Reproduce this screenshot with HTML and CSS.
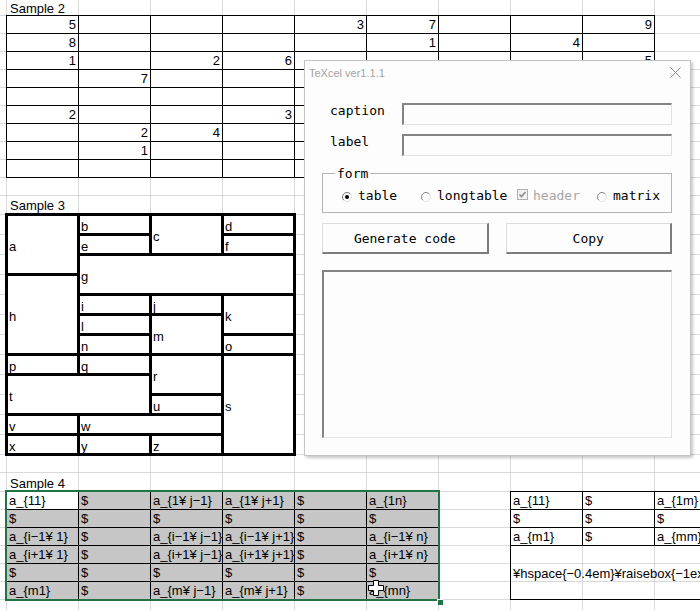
FILE: index.html
```html
<!DOCTYPE html>
<html lang="ja">
<head>
<meta charset="utf-8">
<title>TeXcel</title>
<link rel="stylesheet" href="styles.css">
</head>
<body>
<div class="sheet">
  <div class="label l2">Sample 2</div>
  <div class="sudoku">
    <div>5</div><div></div><div></div><div></div><div>3</div><div>7</div><div></div><div></div><div>9</div>
    <div>8</div><div></div><div></div><div></div><div></div><div>1</div><div></div><div>4</div><div></div>
    <div>1</div><div></div><div>2</div><div>6</div><div></div><div></div><div></div><div></div><div>5</div>
    <div></div><div>7</div><div></div><div></div><div></div><div></div><div></div><div></div><div></div>
    <div></div><div></div><div></div><div></div><div></div><div></div><div></div><div></div><div></div>
    <div>2</div><div></div><div></div><div>3</div><div></div><div></div><div></div><div></div><div></div>
    <div></div><div>2</div><div>4</div><div></div><div></div><div></div><div></div><div></div><div></div>
    <div></div><div>1</div><div></div><div></div><div></div><div></div><div></div><div></div><div></div>
    <div></div><div></div><div></div><div></div><div></div><div></div><div></div><div></div><div></div>
  </div>

  <div class="label l3">Sample 3</div>
  <div class="blocks">
    <div class="ga">a</div><div class="gb">b</div><div class="gc">c</div><div class="gd">d</div>
    <div class="ge">e</div><div class="gf">f</div><div class="gg">g</div><div class="gh">h</div>
    <div class="gi">i</div><div class="gj">j</div><div class="gk">k</div><div class="gl">l</div>
    <div class="gm">m</div><div class="gn">n</div><div class="go">o</div><div class="gp">p</div>
    <div class="gq">q</div><div class="gr">r</div><div class="gs">s</div><div class="gt">t</div>
    <div class="gu">u</div><div class="gv">v</div><div class="gw">w</div><div class="gx">x</div>
    <div class="gy">y</div><div class="gz">z</div>
  </div>

  <div class="label l4">Sample 4</div>
  <div class="s4">
    <div class="mtx">
      <div class="active">a_{11}</div><div>$</div><div>a_{1¥ j−1}</div><div>a_{1¥ j+1}</div><div>$</div><div>a_{1n}</div>
      <div>$</div><div>$</div><div>$</div><div>$</div><div>$</div><div>$</div>
      <div>a_{i−1¥ 1}</div><div>$</div><div>a_{i−1¥ j−1}</div><div>a_{i−1¥ j+1}</div><div>$</div><div>a_{i−1¥ n}</div>
      <div>a_{i+1¥ 1}</div><div>$</div><div>a_{i+1¥ j−1}</div><div>a_{i+1¥ j+1}</div><div>$</div><div>a_{i+1¥ n}</div>
      <div>$</div><div>$</div><div>$</div><div>$</div><div>$</div><div>$</div>
      <div>a_{m1}</div><div>$</div><div>a_{m¥ j−1}</div><div>a_{m¥ j+1}</div><div>$</div><div>a_{mn}</div>
    </div>
    <div class="mtx2">
      <div>a_{11}</div><div>$</div><div>a_{1m}</div>
      <div>$</div><div>$</div><div>$</div>
      <div>a_{m1}</div><div>$</div><div>a_{mm}</div>
      <div class="merged">¥hspace{−0.4em}¥raisebox{−1ex}{¥smash{¥lower{}}}</div>
    </div>
  </div>

  <svg class="cursor" width="16" height="16" viewBox="0 0 16 16">
    <polygon points="5.5,0.5 10.5,0.5 10.5,5.5 15.5,5.5 15.5,10.5 10.5,10.5 10.5,15.5 5.5,15.5 5.5,10.5 0.5,10.5 0.5,5.5 5.5,5.5" fill="#fff" stroke="#000" stroke-width="1"/>
  </svg>

  <div class="dialog">
    <div class="titlebar">
      <span class="title">TeXcel ver1.1.1</span>
      <svg class="close" width="11" height="11" viewBox="0 0 11 11">
        <path d="M0.5 0.5 L10.5 10.5 M10.5 0.5 L0.5 10.5" stroke="#8a8a8a" stroke-width="1" fill="none"/>
      </svg>
    </div>
    <div class="dbody">
      <div class="field"><span class="flabel">caption</span><span class="input"></span></div>
      <div class="field second"><span class="flabel">label</span><span class="input"></span></div>
      <fieldset class="group">
        <legend>form</legend>
        <div class="opts">
          <span class="opt o1">
            <svg class="radio" width="10" height="10" viewBox="0 0 10 10"><circle cx="5" cy="5" r="4.5" fill="#fff" stroke="#e0e0e0"/><path d="M1.8 8.2 A4.5 4.5 0 0 1 8.2 1.8" fill="none" stroke="#7a7a7a"/><circle cx="5" cy="5" r="2" fill="#000"/></svg>
            table
          </span>
          <span class="opt o2">
            <svg class="radio" width="10" height="10" viewBox="0 0 10 10"><circle cx="5" cy="5" r="4.5" fill="#fff" stroke="#e0e0e0"/><path d="M1.8 8.2 A4.5 4.5 0 0 1 8.2 1.8" fill="none" stroke="#8a8a8a"/></svg>
            longtable
          </span>
          <span class="opt o3 disabled">
            <svg class="check" width="11" height="11" viewBox="0 0 11 11"><rect x="0.5" y="0.5" width="10" height="10" fill="#f2f2f2" stroke="#b0b0b0"/><path d="M2.5 5.5 L4.5 7.5 L8.5 3" fill="none" stroke="#8c8c8c" stroke-width="1.6"/></svg>
            header
          </span>
          <span class="opt o4">
            <svg class="radio" width="10" height="10" viewBox="0 0 10 10"><circle cx="5" cy="5" r="4.5" fill="#fff" stroke="#e0e0e0"/><path d="M1.8 8.2 A4.5 4.5 0 0 1 8.2 1.8" fill="none" stroke="#8a8a8a"/></svg>
            matrix
          </span>
        </div>
      </fieldset>
      <div class="buttons">
        <span class="btn">Generate code</span>
        <span class="btn">Copy</span>
      </div>
      <div class="output"></div>
    </div>
  </div>
</div>
</body>
</html>
```

FILE: styles.css
```css
html, body {
  margin: 0;
  padding: 0;
  background: #fff;
}

.sheet {
  --g: #d9d9d9;
  position: relative;
  width: 700px;
  height: 610px;
  overflow: hidden;
  background-color: #fff;
  background-image:
    repeating-linear-gradient(to right, transparent 0 6px, var(--g) 6px 7px, transparent 7px 72px),
    repeating-linear-gradient(to bottom, transparent 0 15px, var(--g) 15px 16px, transparent 16px 18px),
    repeating-linear-gradient(to bottom, var(--g) 0 1px, transparent 1px 20px),
    linear-gradient(var(--g), var(--g)),
    repeating-linear-gradient(to bottom, var(--g) 0 1px, transparent 1px 18px);
  background-size: 100% 100%, 100% 196px, 100% 241px, 100% 1px, 100% 130px;
  background-position: 0 0, 0 0, 0 214px, 0 472px, 0 491px;
  background-repeat: no-repeat;
  font-family: "Liberation Sans", Arial, sans-serif;
  font-size: 13px;
  color: #000;
}

/* sheet labels */
.label {
  box-sizing: border-box;
  display: flex;
  align-items: flex-start;
  padding-left: 10px;
  line-height: 15px;
  white-space: nowrap;
}
.l2 { height: 15px; padding-top: 1px; }
.l3 { height: 17px; margin-top: 18px; padding-top: 2px; }
.l4 { height: 18px; margin-top: 17px; padding-top: 3px; }

/* Sample 2 */
.sudoku {
  margin-left: 6px;
  width: max-content;
  display: grid;
  grid-template-columns: repeat(9, 72px);
  grid-template-rows: repeat(9, 18px);
  border-left: 1px solid #000;
  border-top: 1px solid #000;
}
.sudoku > div {
  border-right: 1px solid #000;
  border-bottom: 1px solid #000;
  text-align: right;
  padding-right: 2px;
  line-height: 17px;
}

/* Sample 3 */
.blocks {
  margin-left: 5px;
  width: max-content;
  display: grid;
  grid-template-columns: repeat(4, 69px);
  grid-template-rows: repeat(12, 17px);
  gap: 3px;
  padding: 3px;
  background: #000;
  grid-template-areas:
    "a b c d"
    "a e c f"
    "a g g g"
    "h g g g"
    "h i j k"
    "h l m k"
    "h n m o"
    "p q r s"
    "t t r s"
    "t t u s"
    "v w w s"
    "x y z s";
}
.blocks > div {
  background: #fff;
  display: flex;
  align-items: center;
  padding: 3px 0 0 1px;
  line-height: 15px;
}
.ga { grid-area: a; } .gb { grid-area: b; } .gc { grid-area: c; } .gd { grid-area: d; }
.ge { grid-area: e; } .gf { grid-area: f; } .gg { grid-area: g; } .gh { grid-area: h; }
.gi { grid-area: i; } .gj { grid-area: j; } .gk { grid-area: k; } .gl { grid-area: l; }
.gm { grid-area: m; } .gn { grid-area: n; } .go { grid-area: o; } .gp { grid-area: p; }
.gq { grid-area: q; } .gr { grid-area: r; } .gs { grid-area: s; } .gt { grid-area: t; }
.gu { grid-area: u; } .gv { grid-area: v; } .gw { grid-area: w; } .gx { grid-area: x; }
.gy { grid-area: y; } .gz { grid-area: z; }

/* Sample 4 */
.s4 {
  display: flex;
  align-items: flex-start;
}
.mtx {
  position: relative;
  flex-shrink: 0;
  margin-left: 6px;
  display: grid;
  grid-template-columns: repeat(6, 72px);
  grid-template-rows: repeat(6, 18px);
  border-left: 1px solid #000;
  border-top: 1px solid #000;
  outline: 2px solid #217346;
  outline-offset: -1px;
}
.mtx::after {
  content: "";
  position: absolute;
  right: -4px;
  bottom: -5px;
  width: 5px;
  height: 5px;
  background: #217346;
  border-left: 1px solid #fff;
  border-top: 1px solid #fff;
}
.mtx > div,
.mtx2 > div {
  border-right: 1px solid #000;
  border-bottom: 1px solid #000;
  padding-left: 2px;
  line-height: 17px;
  white-space: nowrap;
  overflow: hidden;
}
.mtx > div {
  background: #c6c6c6;
}
.mtx > div.active {
  background: #fff;
}
.mtx2 {
  flex-shrink: 0;
  margin-left: 71px;
  display: grid;
  grid-template-columns: repeat(3, 72px);
  grid-template-rows: 18px 18px 18px 54px;
  border-left: 1px solid #000;
  border-top: 1px solid #000;
}
.mtx2 > div.merged {
  grid-column: 1 / -1;
  display: flex;
  align-items: center;
  padding-top: 1px;
  overflow: visible;
}

.cursor {
  position: absolute;
  left: 368px;
  top: 580px;
}

/* Dialog window */
.dialog {
  position: absolute;
  left: 304px;
  top: 60px;
  width: 387px;
  box-sizing: border-box;
  background: #fdfdfd;
  border: 1px solid #c4c4c4;
  box-shadow: 2px 2px 3px rgba(0, 0, 0, 0.22);
  font-family: "DejaVu Sans Mono", monospace;
  font-size: 13px;
  color: #000;
}
.titlebar {
  height: 28px;
  display: flex;
  justify-content: space-between;
  align-items: flex-start;
  padding: 0 9px 0 4px;
}
.title {
  font-family: "Liberation Sans", Arial, sans-serif;
  font-size: 11px;
  line-height: 13px;
  padding-top: 6px;
  color: #a3a3a3;
}
.close {
  margin-top: 6px;
}
.dbody {
  padding: 14px 18px 17px 17px;
}
.field {
  display: flex;
  align-items: flex-start;
  height: 22px;
}
.field.second {
  margin-top: 9px;
}
.flabel {
  width: 80px;
  box-sizing: border-box;
  padding-left: 8px;
  line-height: 15px;
  padding-top: 0;
}
.input {
  flex: 1;
  height: 22px;
  box-sizing: border-box;
  background: #fdfdfd;
  border-top: 2px solid #848484;
  border-left: 2px solid #848484;
  border-right: 1px solid #e2e2e2;
  border-bottom: 1px solid #e2e2e2;
}
.group {
  margin: 10px 0 0 0;
  padding: 7px 0 9px 19px;
  border: 1px solid #b4b4b4;
  min-width: 0;
}
.group legend {
  padding: 0 2px;
  margin-left: -7px;
  line-height: 15px;
}
.opts {
  display: flex;
  line-height: 15px;
  white-space: nowrap;
}
.opt {
  display: flex;
  align-items: center;
  gap: 6px;
}
.o1 { width: 79px; }
.o2 { width: 96px; }
.o3 { width: 80px; gap: 5px; }
.radio { margin-top: 2px; flex-shrink: 0; }
.check { margin-top: -2px; flex-shrink: 0; }
.disabled { color: #a6a6a6; }
.buttons {
  margin-top: 10px;
  display: grid;
  grid-template-columns: 1fr 1fr;
  gap: 17px;
}
.btn {
  height: 31px;
  box-sizing: border-box;
  display: flex;
  align-items: center;
  justify-content: center;
  background: #fdfdfd;
  border-top: 1px solid #dcdcdc;
  border-left: 1px solid #dcdcdc;
  border-right: 2px solid #7c7c7c;
  border-bottom: 2px solid #7c7c7c;
}
.output {
  margin-top: 16px;
  height: 168px;
  box-sizing: border-box;
  background: #fdfdfd;
  border-top: 2px solid #848484;
  border-left: 2px solid #848484;
  border-right: 1px solid #e2e2e2;
  border-bottom: 1px solid #e2e2e2;
}
```
